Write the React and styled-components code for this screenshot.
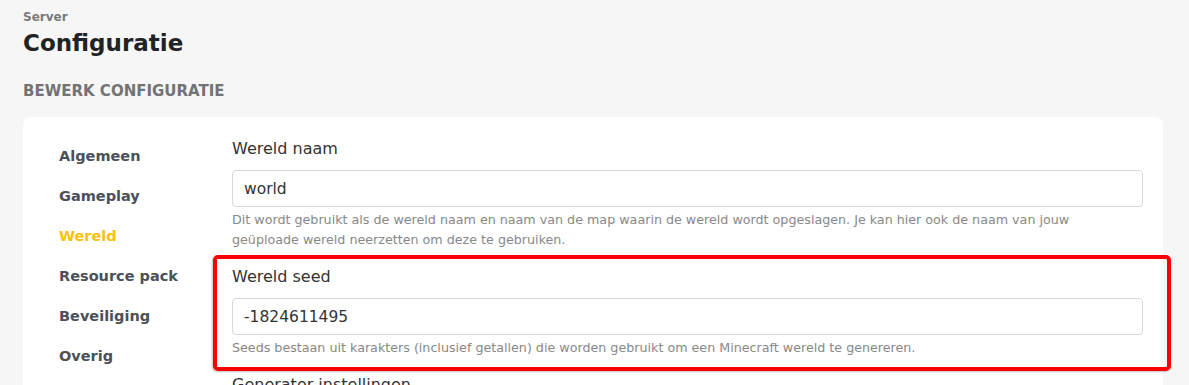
import React from 'react';
import styled, { createGlobalStyle } from 'styled-components';

const GlobalStyle = createGlobalStyle`
  body {
    margin: 0;
    background: #f6f6f6;
    font-family: "DejaVu Sans", "Noto Sans", sans-serif;
  }
`;

const Page = styled.div`
  padding: 8px 26px 0 23px;
  height: 385px;
  box-sizing: border-box;
  overflow: hidden;
`;

const Crumb = styled.div`
  font-size: 12px;
  line-height: 18px;
  font-weight: 600;
  color: #7a7a7a;
`;

const Title = styled.h1`
  margin: 0;
  font-size: 23px;
  line-height: 34px;
  font-weight: 700;
  color: #1f2326;
`;

const Section = styled.h2`
  margin: 21px 0 0;
  font-size: 15px;
  line-height: 20px;
  font-weight: 600;
  color: #737373;
  text-transform: uppercase;
`;

const Card = styled.div`
  margin-top: 16px;
  background: #fff;
  border-radius: 8px;
  display: flex;
  padding: 0 20px 0 36px;
`;

const Menu = styled.nav`
  width: 173px;
  flex-shrink: 0;
  padding-top: 19px;
  display: flex;
  flex-direction: column;
`;

const MenuItem = styled.div`
  height: 40px;
  display: flex;
  align-items: center;
  font-size: 14.5px;
  font-weight: 700;
  color: ${(p) => (p.$active ? '#fcc010' : '#4b505a')};
`;

const Fields = styled.div`
  flex: 1;
  padding-top: 21px;
`;

const Field = styled.div`
  position: relative;
  margin-bottom: 16px;
`;

const Label = styled.div`
  font-size: 16px;
  line-height: 22px;
  color: #333;
  margin-bottom: 10px;
`;

const Input = styled.input`
  display: block;
  width: 100%;
  box-sizing: border-box;
  height: 37px;
  padding: 0 11px;
  border: 1px solid #d8d8d8;
  border-radius: 4px;
  font-family: inherit;
  font-size: 15.5px;
  color: #333;
  background: #fff;
  outline: none;
`;

const Help = styled.div`
  margin-top: 3px;
  font-size: 12.7px;
  line-height: 20px;
  color: #888;
  padding-right: 40px;
`;

const Highlight = styled.div`
  position: absolute;
  left: -19px;
  top: -11px;
  right: -28px;
  bottom: -13px;
  border: 4px solid #ff0000;
  border-radius: 5px;
  box-shadow: -1px 1px 2px rgba(0, 0, 0, 0.25);
  pointer-events: none;
`;

const menu = ['Algemeen', 'Gameplay', 'Wereld', 'Resource pack', 'Beveiliging', 'Overig'];

export default function App() {
  return (
    <>
      <GlobalStyle />
      <Page>
        <Crumb>Server</Crumb>
        <Title>Configuratie</Title>
        <Section>Bewerk configuratie</Section>
        <Card>
          <Menu>
            {menu.map((m) => (
              <MenuItem key={m} $active={m === 'Wereld'}>
                {m}
              </MenuItem>
            ))}
          </Menu>
          <Fields>
            <Field>
              <Label>Wereld naam</Label>
              <Input defaultValue="world" />
              <Help>
                Dit wordt gebruikt als de wereld naam en naam van de map waarin de wereld wordt opgeslagen. Je kan hier
                ook de naam van jouw geüploade wereld neerzetten om deze te gebruiken.
              </Help>
            </Field>
            <Field>
              <Label>Wereld seed</Label>
              <Input defaultValue="-1824611495" />
              <Help>
                Seeds bestaan uit karakters (inclusief getallen) die worden gebruikt om een Minecraft wereld te
                genereren.
              </Help>
              <Highlight />
            </Field>
            <Field>
              <Label>Generator instellingen</Label>
              <Input defaultValue="" />
            </Field>
          </Fields>
        </Card>
      </Page>
    </>
  );
}
